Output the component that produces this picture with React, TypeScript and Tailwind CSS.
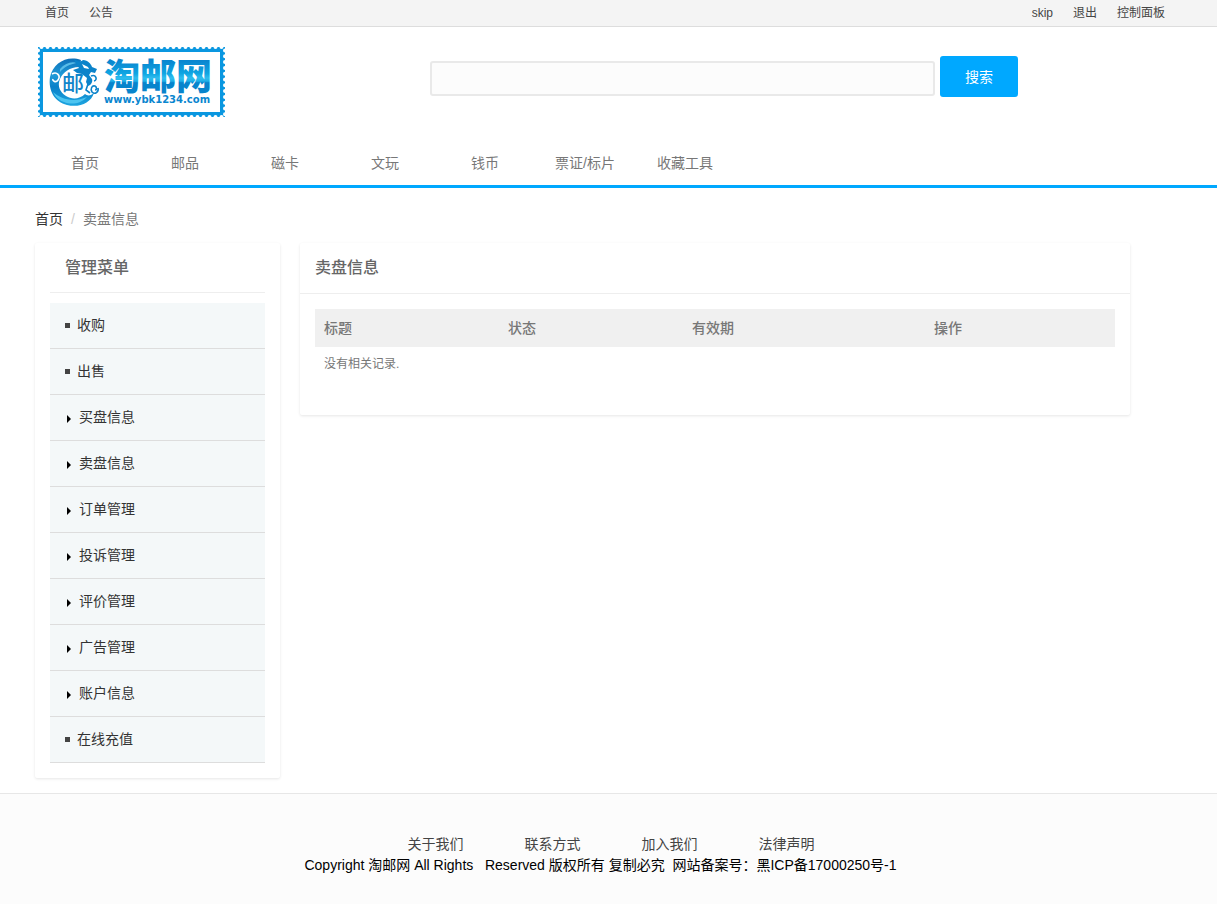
import React from 'react';

interface MenuItem {
  label: string;
  expandable: boolean;
}

const navItems = ['首页', '邮品', '磁卡', '文玩', '钱币', '票证/标片', '收藏工具'];

const menuItems: MenuItem[] = [
  { label: '收购', expandable: false },
  { label: '出售', expandable: false },
  { label: '买盘信息', expandable: true },
  { label: '卖盘信息', expandable: true },
  { label: '订单管理', expandable: true },
  { label: '投诉管理', expandable: true },
  { label: '评价管理', expandable: true },
  { label: '广告管理', expandable: true },
  { label: '账户信息', expandable: true },
  { label: '在线充值', expandable: false },
];

const footerLinks = ['关于我们', '联系方式', '加入我们', '法律声明'];

const Logo: React.FC = () => (
  <svg width="188" height="70" viewBox="0 0 188 70" role="img" aria-label="淘邮网">
    <defs>
      <linearGradient id="word" gradientUnits="userSpaceOnUse" x1="0" y1="14" x2="0" y2="45">
        <stop offset="0" stopColor="#0a86cf" />
        <stop offset="0.4" stopColor="#0fa5e2" />
        <stop offset="0.55" stopColor="#2fbdee" />
        <stop offset="0.65" stopColor="#1eb0e8" />
        <stop offset="0.7" stopColor="#0784cc" />
        <stop offset="1" stopColor="#0784cc" />
      </linearGradient>
      <linearGradient id="ring" x1="0" y1="0" x2="0" y2="1">
        <stop offset="0" stopColor="#0d6fb8" />
        <stop offset="0.35" stopColor="#1f9bd8" />
        <stop offset="0.6" stopColor="#0a80c8" />
        <stop offset="1" stopColor="#1da5e0" />
      </linearGradient>
    </defs>
    {/* perforated stamp edge */}
    <rect x="0" y="0" width="187" height="70" fill="#0a97e0" />
    <rect x="5" y="5" width="177" height="60" fill="#fff" />
    <g stroke="#fff" strokeWidth="4" strokeLinecap="round" fill="none">
      <path d="M3.5 0H186" strokeDasharray="0 6" />
      <path d="M3.5 70H186" strokeDasharray="0 6" />
      <path d="M0 3.5V69" strokeDasharray="0 5.8" />
      <path d="M187 3.5V69" strokeDasharray="0 5.8" />
    </g>
    {/* dragon ring */}
    <path
      d="M43 13C29 8 15 16 12 30C10 44 17 55 29 58C41 61 53 56 56 46C53 49 49 49 47 47C42 52 34 53 28 49C22 45 19 39 22 32C25 25 32 20 41 20Z"
      fill="url(#ring)"
    />
    <path d="M15 45C23 52 35 56 49 50C43 57 33 58 26 55C20 53 17 49 15 45Z" fill="#4cc4f0" />
    <path d="M22 22C27 16 34 14 39 16C32 17 26 20 22 25Z" fill="#58bce8" />
    {/* head and mane */}
    <path
      d="M36 12C40 15 43 15 45 13C50 13 53 17 54 20L59 22L57 26L53 25L51 28L54 32C55 35 53 38 50 39L48 35L49 31L44 27L39 26L35 23L41 21L38 17Z"
      fill="#0b83ca"
    />
    <path d="M44 17L50 20L51 22L46 21Z" fill="#fff" />
    <path
      d="M53 29C58 27 60 33 56 34M50 37L48 43L52 46M57 43C59 43 59 40 57 39C54 38 52 42 54 45C57 48 61 45 60 41"
      fill="none"
      stroke="#0b83ca"
      strokeWidth="1.6"
    />
    <path d="M14 27C19 24 23 29 20 33C18 36 14 34 15 32" fill="none" stroke="#fff" strokeWidth="1.6" />
    {/* seal character in the middle of the ring */}
    <text x="24" y="44" fontSize="22" fontWeight="500" fill="#1184c9" fontFamily="'Noto Sans CJK SC', sans-serif">
      邮
    </text>
    <text x="66" y="43" fontSize="36" fontWeight="900" fill="url(#word)" fontFamily="'Noto Sans CJK SC', sans-serif">
      淘邮网
    </text>
    <text x="66" y="56" fontSize="10" fontWeight="700" fill="#0a86cf" fontFamily="'DejaVu Sans', sans-serif">
      www.ybk1234.com
    </text>
  </svg>
);

const MenuMarker: React.FC<{ expandable: boolean }> = ({ expandable }) =>
  expandable ? (
    <svg className="ml-[2px] mr-2 mt-[3px]" width="4" height="8" viewBox="0 0 4 8" aria-hidden="true">
      <path d="M0 0L4 4L0 8Z" fill="#000" />
    </svg>
  ) : (
    <span className="mr-[7px] size-[5px] bg-[#444]" />
  );

const TopBar: React.FC = () => (
  <div className="border-b border-[#ddd] bg-[#f4f4f4] text-xs text-[#444]">
    <div className="mx-auto flex h-[26px] max-w-[1147px] items-center justify-between pl-[10px] pr-[17px]">
      <div className="flex gap-5">
        <a href="#">首页</a>
        <a href="#">公告</a>
      </div>
      <div className="flex gap-5">
        <a href="#">skip</a>
        <a href="#">退出</a>
        <a href="#">控制面板</a>
      </div>
    </div>
  </div>
);

const Header: React.FC = () => (
  <header className="border-b-3 border-[#00a8ff]">
    <div className="mx-auto max-w-[1147px]">
      <div className="flex items-start pl-[3px] pt-5">
        <a href="#" className="shrink-0">
          <Logo />
        </a>
        <form className="ml-[204px] mt-[9px] flex flex-1 items-center gap-[5px]" onSubmit={(e) => e.preventDefault()}>
          <input
            type="text"
            aria-label="搜索"
            className="mt-1 h-[35px] w-full max-w-[505px] rounded-[3px] border-2 border-[#e9e9e9] bg-[#fcfcfc] px-2 outline-none"
          />
          <button type="submit" className="h-[41px] w-[78px] shrink-0 rounded-[3px] bg-[#00a8ff] text-white">
            搜索
          </button>
        </form>
      </div>
      <nav className="mt-6 flex text-[#777]">
        {navItems.map((item) => (
          <a key={item} href="#" className="w-[100px] pb-3 pt-3 text-center leading-5">
            {item}
          </a>
        ))}
      </nav>
    </div>
  </header>
);

const Sidebar: React.FC = () => (
  <aside className="w-[245px] shrink-0 rounded-[2px] bg-white px-[15px] pb-[15px] shadow-[0_1px_3px_rgba(0,0,0,0.1)]">
    <h2 className="mb-[10px] h-[50px] border-b border-[#eee] px-[15px] text-base font-medium leading-[50px] text-[#666]">
      管理菜单
    </h2>
    <ul>
      {menuItems.map((item) => (
        <li key={item.label} className="border-b border-[#ddd] bg-[#f4f8f9]">
          <a href="#" className="flex h-[45px] items-center px-[15px] pb-px text-[#333]">
            <MenuMarker expandable={item.expandable} />
            {item.label}
          </a>
        </li>
      ))}
    </ul>
  </aside>
);

const SellList: React.FC = () => (
  <section className="flex-1 rounded-[2px] bg-white shadow-[0_1px_3px_rgba(0,0,0,0.1)]">
    <h2 className="h-[51px] border-b border-[#eee] px-[15px] text-base font-medium leading-[50px] text-[#666]">
      卖盘信息
    </h2>
    <div className="px-[15px] pb-[35px] pt-[15px]">
      <table className="w-full table-fixed text-left">
        <thead>
          <tr className="h-[38px] bg-[#f0f0f0] text-[#777]">
            <th className="w-[184px] px-[9px] font-medium">标题</th>
            <th className="w-[184px] px-[9px] font-medium">状态</th>
            <th className="w-[242px] px-[9px] font-medium">有效期</th>
            <th className="px-[9px] font-medium">操作</th>
          </tr>
        </thead>
        <tbody>
          <tr className="h-[33px] text-xs text-[#777]">
            <td colSpan={4} className="px-[9px]">
              没有相关记录.
            </td>
          </tr>
        </tbody>
      </table>
    </div>
  </section>
);

const Footer: React.FC = () => (
  <footer className="mt-[15px] flex-1 border-t border-[#e7e7e7] bg-[#fcfcfc] pb-[28px] pt-10 text-center leading-[21px]">
    <div className="flex justify-center gap-[61px] pl-[5px] text-[#444]">
      {footerLinks.map((link) => (
        <a key={link} href="#">
          {link}
        </a>
      ))}
    </div>
    <p className="whitespace-pre-wrap pr-4 text-black">
      {'Copyright 淘邮网 All Rights   Reserved 版权所有 复制必究  网站备案号：黑ICP备17000250号-1'}
    </p>
  </footer>
);

const App: React.FC = () => {
  return (
    <div
      lang="zh-CN"
      className="flex min-h-screen flex-col bg-white font-['Liberation_Sans','Noto_Sans_CJK_SC',sans-serif] text-sm"
    >
      <TopBar />
      <Header />
      <main className="mx-auto w-full max-w-[1147px]">
        <nav aria-label="breadcrumb" className="flex pb-[14px] pt-[21px] leading-5">
          <a href="#" className="text-[#333]">
            首页
          </a>
          <span className="px-2 text-[#ccc]">/</span>
          <span className="text-[#777]">卖盘信息</span>
        </nav>
        <div className="flex max-w-[1095px] items-start gap-5">
          <Sidebar />
          <SellList />
        </div>
      </main>
      <Footer />
    </div>
  );
};

export default App;
